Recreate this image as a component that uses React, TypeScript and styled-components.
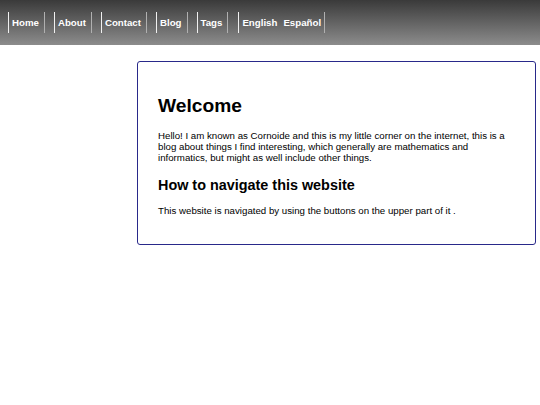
import React from "react";
import styled, { createGlobalStyle } from "styled-components";

const GlobalStyle = createGlobalStyle`
	html, body {
		margin: 0;
		padding: 0;
		background: #ffffff;
		font-family: "Liberation Sans", Arial, sans-serif;
		font-size: 9.7px;
		color: #000000;
	}
`;

const navLinks = ["Home", "About", "Contact", "Blog", "Tags"];
const languages = ["English", "Español"];

export default function App() {
	return (
		<>
			<GlobalStyle />
			<Header>
				<Nav>
					{navLinks.map((label) => (
						<NavItem key={label}>{label}</NavItem>
					))}
					<LangGroup>
						{languages.map((lang) => (
							<span key={lang}>{lang}</span>
						))}
					</LangGroup>
				</Nav>
			</Header>
			<Main>
				<Card>
					<Title>Welcome</Title>
					<Text>
						Hello! I am known as Cornoide and this is my little corner on the
						internet, this is a blog about things I find interesting, which
						generally are mathematics and informatics, but might as well include
						other things.
					</Text>
					<Subtitle>How to navigate this website</Subtitle>
					<Text>
						This website is navigated by using the buttons on the upper part of
						it .
					</Text>
				</Card>
			</Main>
		</>
	);
}

const Header = styled.header`
	height: 45px;
	display: flex;
	align-items: center;
	padding-left: 8px;
	background: linear-gradient(to bottom, #3a3a3a, #8c8c8c);
`;

const Nav = styled.nav`
	display: flex;
	align-items: center;
	gap: 9px;
`;

const NavItem = styled.span`
	display: flex;
	align-items: center;
	height: 21px;
	padding: 0 5px 0 3px;
	border-left: 1px solid #f0f0f0;
	border-right: 1px solid #b0b0b0;
	color: #ffffff;
	font-weight: 700;
	cursor: pointer;
`;

const LangGroup = styled(NavItem)`
	margin-left: 1px;
	gap: 6px;
	padding: 0 3px;
`;

const Main = styled.main`
	padding: 16px 4px 0 137px;
`;

const Card = styled.section`
	border: 1.5px solid #29298a;
	border-radius: 3px;
	padding: 20px 20px 18px 20px;
	min-height: 140px;
`;

const Title = styled.h1`
	font-size: 19.2px;
	margin: 12.9px 0;
`;

const Subtitle = styled.h2`
	font-size: 14.4px;
	margin: 14px 0 12px;
`;

const Text = styled.p`
	margin: 9.6px 0;
	line-height: 1.15;
`;
